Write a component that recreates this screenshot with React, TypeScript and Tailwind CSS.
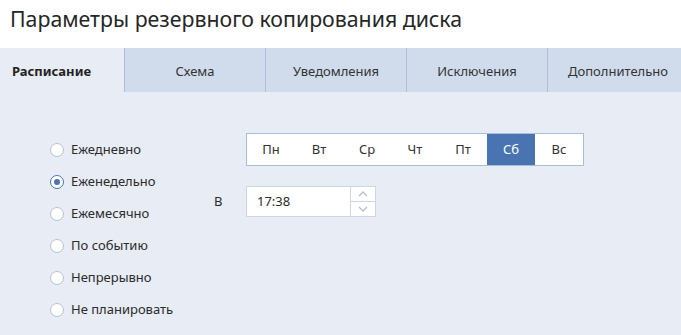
import { useState } from 'react';

const tabs = ['Расписание', 'Схема', 'Уведомления', 'Исключения', 'Дополнительно'];
const days = ['Пн', 'Вт', 'Ср', 'Чт', 'Пт', 'Сб', 'Вс'];
const options = ['Ежедневно', 'Еженедельно', 'Ежемесячно', 'По событию', 'Непрерывно', 'Не планировать'];

function Radio({ checked }: { checked: boolean }) {
  return (
    <span
      className={`flex h-[14px] w-[14px] items-center justify-center rounded-full border bg-white ${
        checked ? 'border-[#4a74b1]' : 'border-[#b4c3d8]'
      }`}
    >
      {checked && <span className="h-[6px] w-[6px] rounded-full bg-[#4a74b1]" />}
    </span>
  );
}

export default function App() {
  const [option, setOption] = useState(1);
  const [day, setDay] = useState(5);

  return (
    <div className="h-[335px] w-[681px] overflow-hidden bg-[#e7ecf5] font-['Noto_Sans',sans-serif] text-[#2b2b2b]">
      {/* Header */}
      <div className="h-[48px] bg-white pl-[10px] pt-[4px]">
        <h1 className="text-[21.3px] leading-[29px] text-[#262626]">Параметры резервного копирования диска</h1>
      </div>

      {/* Tabs */}
      <div className="flex h-[44px] overflow-hidden bg-[#d0dcec]">
        {tabs.map((t, i) => (
          <div
            key={t}
            className={`flex shrink-0 items-center pt-[3px] text-[13px] ${
              i === 0
                ? 'w-[124px] justify-start bg-[#e7ecf5] pl-[12px] text-[13.5px] font-bold text-[#222]'
                : 'w-[141px] justify-center border-l border-[#aebfd6] text-[#333]'
            }`}
          >
            {t}
          </div>
        ))}
      </div>

      {/* Content */}
      <div className="flex pl-[50px] pt-[41px]">
        <div className="mt-[8px] flex w-[164px] flex-col gap-[14px]">
          {options.map((o, i) => (
            <label key={o} className="flex h-[18px] cursor-pointer items-center gap-[7px] text-[13px]" onClick={() => setOption(i)}>
              <Radio checked={option === i} />
              <span>{o}</span>
            </label>
          ))}
        </div>

        <div className="flex flex-col">
          <div className="ml-[32px] flex h-[33px] w-[338px] border border-[#a9bedc] bg-white">
            {days.map((d, i) => (
              <button
                key={d}
                onClick={() => setDay(i)}
                className={`flex h-full flex-1 items-center justify-center text-[13px] ${
                  day === i ? 'bg-[#4a74b1] text-white' : 'text-[#333]'
                }`}
              >
                {d}
              </button>
            ))}
          </div>

          <div className="mt-[20px] flex items-center">
            <span className="w-[32px] text-[13px]">В</span>
            <div className="flex h-[31px] w-[130px] border border-[#ccd6e4] bg-white">
              <div className="flex flex-1 items-center pl-[10px] text-[13px]">17:38</div>
              <div className="flex w-[25px] flex-col border-l border-[#ccd6e4]">
                <div className="flex flex-1 items-center justify-center border-b border-[#ccd6e4]">
                  <svg width="10" height="6" viewBox="0 0 10 6" fill="none" stroke="#b5c0cf" strokeWidth="1.3">
                    <path d="M1 5 L5 1 L9 5" />
                  </svg>
                </div>
                <div className="flex flex-1 items-center justify-center">
                  <svg width="10" height="6" viewBox="0 0 10 6" fill="none" stroke="#b5c0cf" strokeWidth="1.3">
                    <path d="M1 1 L5 5 L9 1" />
                  </svg>
                </div>
              </div>
            </div>
          </div>
        </div>
      </div>
    </div>
  );
}
